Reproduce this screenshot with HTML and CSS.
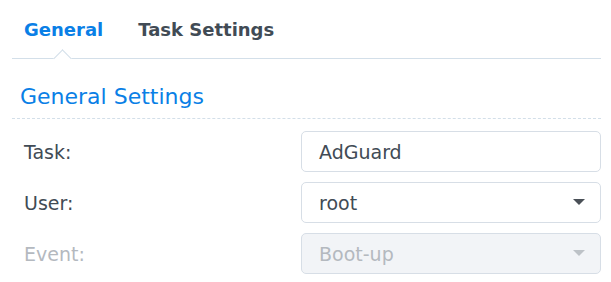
FILE: index.html
```html
<!DOCTYPE html>
<html lang="en">
<head>
    <meta charset="UTF-8">
    <title>Task</title>
    <link rel="stylesheet" href="styles.css">
</head>
<body>
    <div class="panel">
        <div class="tabs">
            <div class="tab active">General</div>
            <div class="tab">Task Settings</div>
        </div>

        <h2 class="section-title">General Settings</h2>

        <div class="form">
            <div class="row">
                <label>Task:</label>
                <div class="field">AdGuard</div>
            </div>
            <div class="row">
                <label>User:</label>
                <div class="field select">root<span class="arrow"></span></div>
            </div>
            <div class="row disabled">
                <label>Event:</label>
                <div class="field select">Boot-up<span class="arrow"></span></div>
            </div>
        </div>
    </div>
</body>
</html>
```

FILE: styles.css
```css
* {
    margin: 0;
    padding: 0;
    box-sizing: border-box;
}

body {
    font-family: 'DejaVu Sans', Verdana, sans-serif;
    background: white;
    color: #414b55;
}

.panel {
    padding: 0 10px 0 12px;
}

.tabs {
    display: flex;
    gap: 35px;
    padding: 19px 0 0 12px;
    height: 59px;
    border-bottom: 1px solid #d3dfe9;
    position: relative;
}

.tab {
    font-size: 18px;
    font-weight: 700;
    color: #414b55;
}

.tab.active {
    color: #0a7fe6;
    position: relative;
}

/* little notch under the active tab */
.tab.active::after {
    content: '';
    position: absolute;
    left: 32px;
    top: 33px;
    width: 12px;
    height: 12px;
    background: white;
    border-left: 1px solid #d3dfe9;
    border-top: 1px solid #d3dfe9;
    transform: rotate(45deg);
}

.section-title {
    font-size: 22px;
    font-weight: 400;
    color: #0a7fe6;
    padding: 25px 0 0 8px;
    height: 60px;
    border-bottom: 1px dashed #d3dfe9;
}

.form {
    padding-top: 12px;
    display: flex;
    flex-direction: column;
    gap: 10px;
}

.row {
    display: flex;
    align-items: center;
    height: 41px;
    padding-top: 1px;
}

.row label {
    width: 289px;
    padding-left: 12px;
    font-size: 19px;
}

.field {
    width: 300px;
    height: 41px;
    margin-top: -1px;
    border: 1px solid #d7dee6;
    border-radius: 5px;
    padding: 1px 17px 0;
    display: flex;
    align-items: center;
    font-size: 19px;
    position: relative;
}

.arrow {
    position: absolute;
    right: 15px;
    top: 16px;
    border-left: 6px solid transparent;
    border-right: 6px solid transparent;
    border-top: 6px solid #4a5057;
}

.disabled label,
.disabled .field {
    color: #b4b9bf;
}

.disabled .field {
    background: #f2f4f7;
}

.disabled .arrow {
    border-top-color: #bdc2c7;
}
```
